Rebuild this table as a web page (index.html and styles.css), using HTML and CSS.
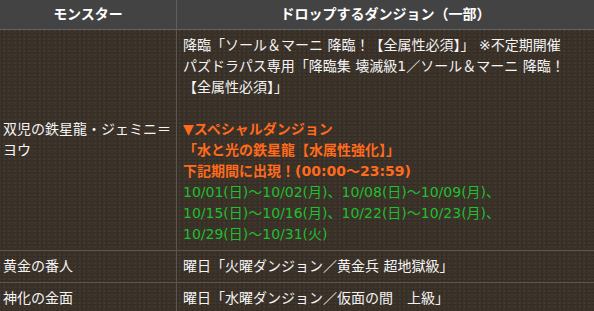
FILE: index.html
```html
<!DOCTYPE html>
<html lang="ja">
<head>
<meta charset="utf-8">
<link rel="stylesheet" href="styles.css">
</head>
<body>
<table class="drop">
  <thead>
    <tr>
      <th class="c1">モンスター</th>
      <th class="c2">ドロップするダンジョン（一部）</th>
    </tr>
  </thead>
  <tbody>
    <tr>
      <td class="c1 mid">双児の鉄星龍・ジェミニ＝ヨウ</td>
      <td class="c2">
        <div>降臨「ソール＆マーニ 降臨！【全属性必須】」 ※不定期開催</div>
        <div>パズドラパス専用「降臨集 壊滅級1／ソール＆マーニ 降臨！【全属性必須】」</div>
        <div class="blank">&nbsp;</div>
        <div class="orange">▼スペシャルダンジョン</div>
        <div class="orange">「水と光の鉄星龍【水属性強化】」</div>
        <div class="orange">下記期間に出現！(00:00～23:59)</div>
        <div class="green">10/01(日)～10/02(月)、10/08(日)～10/09(月)、<br>10/15(日)～10/16(月)、10/22(日)～10/23(月)、<br>10/29(日)～10/31(火)</div>
      </td>
    </tr>
    <tr>
      <td class="c1">黄金の番人</td>
      <td class="c2">曜日「火曜ダンジョン／黄金兵 超地獄級」</td>
    </tr>
    <tr>
      <td class="c1">神化の金面</td>
      <td class="c2">曜日「水曜ダンジョン／仮面の間　上級」</td>
    </tr>
  </tbody>
</table>
</body>
</html>
```
FILE: styles.css
```css
html, body {
  margin: 0;
  padding: 0;
  background: #3a3128;
}
body {
  width: 594px;
  height: 311px;
  overflow: hidden;
  font-family: "DejaVu Sans", "Noto Sans CJK JP", sans-serif;
  font-size: 14px;
  line-height: 21px;
  color: #f4f4f4;
}
.drop {
  border-collapse: collapse;
  width: 594px;
  table-layout: fixed;
  background-color: #3a3128;
  background-image:
    radial-gradient(rgba(0,0,0,0.12) 1px, transparent 1.5px),
    radial-gradient(rgba(255,255,255,0.04) 1px, transparent 1.5px);
  background-size: 4px 3px, 5px 4px;
  background-position: 0 0, 2px 1px;
}
.drop th {
  background: #434343;
  color: #fff;
  font-weight: bold;
  height: 29px;
  padding: 0;
  text-align: center;
  border-bottom: 1px solid #626262;
}
.drop th.c1 { border-right: 1px solid #5e5e5e; }
.c1 { width: 176px; }
.drop td {
  padding: 5px 6px;
  vertical-align: top;
  border-bottom: 1px solid #5c5550;
}
.drop td.c1 {
  padding-left: 3px;
  padding-right: 4px;
  border-right: 1px solid #5c5550;
}
.drop td.mid { vertical-align: middle; }
.orange { color: #ff6a1c; font-weight: bold; }
.green { color: #1fbf2e; }
```
